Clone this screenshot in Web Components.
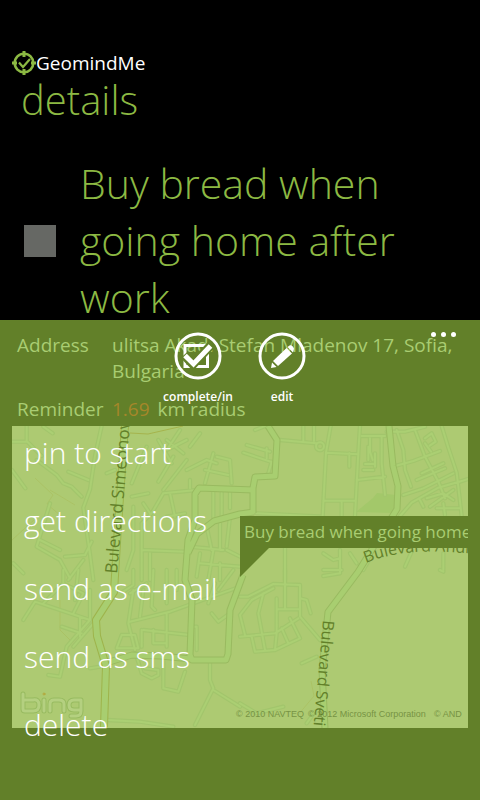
<!DOCTYPE html>
<html lang="en">
<head>
<meta charset="utf-8">
<meta name="viewport" content="width=device-width, initial-scale=1">
<title>GeomindMe</title>
<style>
  html, body { height: 100%; }
  body {
    margin: 0;
    background: #000;
    font-family: "Open Sans", "Noto Sans", sans-serif;
    --accent: #8cb943;
    --panel: #628029;
    --soft: #a9cd72;
  }
</style>
</head>
<body>
<geo-app>
  <geo-brand slot="header">GeomindMe</geo-brand>
  <geo-task slot="header" heading="details">Buy bread when going home after work</geo-task>
  <geo-details slot="details">
    <geo-field label="Address">ulitsa Akad. Stefan Mladenov 17, Sofia, Bulgaria</geo-field>
    <geo-field label="Reminder" amount="1.69">km radius</geo-field>
    <geo-map slot="map">Buy bread when going home after work</geo-map>
  </geo-details>
  <geo-appbar slot="menu">
    <geo-action slot="actions" icon="check">complete/in</geo-action>
    <geo-action slot="actions" icon="pencil">edit</geo-action>
    <geo-menu-item>pin to start</geo-menu-item>
    <geo-menu-item>get directions</geo-menu-item>
    <geo-menu-item>send as e-mail</geo-menu-item>
    <geo-menu-item>send as sms</geo-menu-item>
    <geo-menu-item>delete</geo-menu-item>
  </geo-appbar>
</geo-app>

<script>
const define = (name, render) => customElements.define(name, class extends HTMLElement {
  constructor() {
    super();
    this.attachShadow({ mode: "open" }).innerHTML = render(this);
  }
});

define("geo-app", () => `
  <style>
    :host { display: grid; grid-template-rows: auto 1fr; min-height: 100vh; }
    header { padding-top: 50px; }
    ::slotted([slot="details"]), ::slotted([slot="menu"]) { grid-area: 2 / 1; margin-top: -6px; }
    ::slotted([slot="menu"]) { z-index: 1; }
  </style>
  <header><slot name="header"></slot></header>
  <slot name="details"></slot>
  <slot name="menu"></slot>`);

define("geo-brand", () => `
  <style>
    :host { display: flex; align-items: center; padding-left: 12px; height: 26px; font-size: 19px; line-height: 26px; color: #fff; }
    svg { width: 24px; height: 24px; flex: none; }
  </style>
  <svg viewBox="0 0 24 24" fill="none" stroke="#8cb943" aria-hidden="true">
    <circle cx="12" cy="12" r="9.3" stroke-width="2.6"/>
    <path d="M12 0v6M12 18v6M0 12h5M19 12h5" stroke-width="3"/>
    <path d="M7 11.5l4 4.5 7-8" stroke-width="2.2"/>
  </svg><slot></slot>`);

define("geo-task", el => `
  <style>
    :host { display: block; color: var(--accent); font-weight: 300; }
    h1 { margin: 0; padding-left: 21px; font-size: 40px; line-height: 48px; font-weight: 300; }
    label { display: grid; grid-template-columns: 32px 1fr; align-items: center; gap: 24px; padding: 31px 24px 0; font-size: 41px; line-height: 57px; }
    input { appearance: none; width: 32px; height: 32px; margin: 0; background: #666864; }
  </style>
  <h1>${el.getAttribute("heading")}</h1>
  <label><input type="checkbox"><span><slot></slot></span></label>`);

define("geo-details", () => `
  <style>
    :host { display: block; box-sizing: border-box; padding: 12px 12px 72px; background: var(--panel); color: var(--soft); }
    .fields { display: grid; gap: 12px; padding: 0 5px 4px; }
  </style>
  <div class="fields"><slot></slot></div>
  <slot name="map"></slot>`);

define("geo-field", el => `
  <style>
    :host { display: grid; grid-template-columns: 95px 1fr; font-size: 19px; line-height: 26px; }
    .amount { color: #a68729; margin-right: 8px; }
  </style>
  <span>${el.getAttribute("label")}</span>
  <span>${el.hasAttribute("amount") ? `<span class="amount">${el.getAttribute("amount")}</span>` : ""}<slot></slot></span>`);

define("geo-map", () => `
  <style>
    :host { display: block; position: relative; overflow: hidden; aspect-ratio: 456 / 302; background: #adca72; }
    svg.map { display: block; width: 100%; height: 100%; }
    .callout { position: absolute; left: 50%; bottom: 50%; white-space: nowrap; }
    .callout p { margin: 0; padding: 0 4px; background: var(--panel); font-size: 17px; line-height: 32px; }
    .callout svg { display: block; width: 29px; height: 29px; }
    text { font-family: "Open Sans", sans-serif; font-size: 16px; fill: #628029; }
    .copyright text { font-family: "Liberation Sans", sans-serif; font-size: 9px; fill: #779344; }
  </style>
  <svg class="map" viewBox="12 426 456 302" preserveAspectRatio="xMidYMid slice" role="img" aria-label="Map">
    <defs>
      <g id="minor" fill="none" stroke-linecap="round" stroke-linejoin="round">
        <g transform="translate(0 420) scale(.33333)">
          <path d="M80 18v45l45 45M36 150l40 55M36 65h44M130 20l28 20M305 18l-20 90-15 100-20 55M110 120l60 45 20 25 25 10 30 30M205 155l60 25M150 250l-40 130 70 40 30 55M250 263l20 140M120 360l60 30M195 410l60-5 20-40M270 403l10 77M250 420l-45 60M320 160l25-10"/>
          <path d="M475 60l40 70M440 80l-45 110M500 60l50 40M540 30l-40 60 60-30M600 40l-30 40M520 110l-45 75M560 120l-70 90M560 150l60-30 30 10M640 100l-25 90M650 110l40 10 5 70M570 180v25M615 150l70 15M490 220l100-10M490 220l-35 60-30 30M430 250l20 30M425 310v170M400 260v130l-20 60M425 390l130 5M450 400v80M500 290l55-10M510 220l15 70M640 205v95M665 205v90M690 205v60M620 320l15 70M660 310v80M570 380l100 10M600 400l-10 70M640 390l-15 90M690 290l-10 90M680 390l40 20M600 430l120 10M660 430v50M40 430l30 30M395 230l50-10"/>
        </g>
        <g transform="translate(240 420) scale(.33333)">
          <path d="M45 30l30-12M20 75l70 20M10 98l85 28M80 85v30M95 125l-10 35M120 60l110 10M190 18v45M222 18v45M260 98l95 5M272 18l-14 80-10 190M360 18l-5 80-10 190M328 100v40M365 48h70M390 55v40l8 25M385 80v40M375 132h25M370 150h30M405 100v40M350 180l85-10M425 50v80l10 95M250 242h95M305 245v43M50 280l200 10M440 35h55l60-15M470 30l20 60 5 60 18 50M525 30l30 80 40 75 20 50M465 138l55-15 80-30M605 18l20 65 25 75 15 130M555 55l20-15 12 25-18 12M555 70l18 25M545 160l65-30M530 180l85-35M490 225l60-20 90-45M480 288l35-40 80-45 70-20M560 235l50-15 30 20M540 240l10 20M590 265h70M610 250l5 35M660 185l24-8M640 210l-70 50"/>
          <path d="M135 385v95M250 400l30 20 20-5v45l-50 8M300 390v25M330 400l20 30M515 395l-20 45M610 400v50M370 450l20-35"/>
          <circle cx="240" cy="79" r="12"/>
        </g>
        <g transform="translate(0 570) scale(.33333)">
          <path d="M70 150l35-55 165 55M130 100l60-60 60 30-30 60M190 0v40M235 0l-10 90M185 170l60 20M240 140v60M270 150l-70 80-20 90-35-5M270 150V60M280 160l-60 70M270 295l30-5M400 60l-15 100 20 80M390 155l120-30 210-75M430 60l-10 80M460 0l-5 110 10 10M500 0v100M530 0v60M430 180l140 15M425 180v50M460 180v40h40M500 130v100M365 195h40l10 40h-65zM635 130l20 25 35-25M575 170h15v70M625 100l20-60M655 60l45-60M410 260l15 50 30 15 20-10v-15l-40-5M490 260v95l45 10 20-60M630 280v50l10 25-55 110M640 360l80 50M320 450l100 5 100 15M400 0v45l-30 20M390 70l50-30"/>
        </g>
        <g transform="translate(240 570) scale(.33333)">
          <path d="M0 80h25l75-38 80 3v95l60 70M0 200l105-10 70-45M0 135l35-45 65-35M70 70l-15 60 20 110M135 0v115M110 85v105l-5 50M110 118h65M35 200l10 45 60-5 75-35-30-60M125 175l20 45M180 85l20 5 12 40M0 135l15 60M185 280l45-20M0 400l50 30 80-20M200 460l25-35M250 0h55M600 0l10 5"/>
        </g>
      </g>
      <g id="major" fill="none" stroke-linejoin="round">
        <path d="M254 490l-55-2-4 6v26l-7 20-3 40 7 20-2 55 2 5h34l2-6 2-44 13-35M254 512l-14 2-26 7-17 13-9 19M106 663l26-8 29 1 30 3"/>
        <path d="M268 426l9 14-2 36-20 1-2 11v25"/>
        <path d="M389 426l4 40 5 20-1 23-39 63-30 40-6 58 3 58"/>
      </g>
      <path id="boulevard" d="M125 426l-7 100-4 66-18 28 1 16 9 30-2 61" fill="none" stroke-linejoin="round"/>
      <path id="andrey" d="M366 563Q400 549 448 552T480 552"/>
      <path id="bing" d="M23 694v15q0 2 2 2h8q6 0 6-6t-6-5h-8M44 700v11M50 711v-7q0-4 4-4h5q5 0 5 4v7M81 700h-7q-5 0-5 5t5 5h7v-10 11q0 5-5 5h-5"/>
    </defs>
    <path d="M356 512l17-14 4-5 19 2-1 18z" fill="#a3c86a"/>
    <g fill="none" stroke="#a5b44d" stroke-width="1">
      <path d="M130 433l18 1 35-8"/>
      <path d="M35 478l18 17-6 9 14 12M50 490l25 15M12 540l22-20M60 600v30l12 12M298 715l16-19-3-15" opacity=".35"/>
    </g>
    <use href="#minor" stroke="#a2c56c" stroke-width="13"/>
    <use href="#minor" stroke="#abcf73" stroke-width="6"/>
    <use href="#major" stroke="#99ba60" stroke-width="7"/>
    <use href="#major" stroke="#a8ce70" stroke-width="5"/>
    <use href="#boulevard" stroke="#9eb44c" stroke-width="8"/>
    <use href="#boulevard" stroke="#a8ce70" stroke-width="6"/>
    <text transform="translate(117 574) rotate(-85)" style="font-size:17px">Bulevard Simeonovsko</text>
    <text transform="translate(323 620) rotate(95)">Bulevard Sveti</text>
    <text><textPath href="#andrey">Bulevard Andrey</textPath></text>
    <g fill="none" stroke-linecap="round" stroke-linejoin="round">
      <use href="#bing" stroke="#98bb60" stroke-width="5"/>
      <use href="#bing" stroke="#b4d080" stroke-width="3"/>
      <circle cx="44" cy="694" r="1" stroke="#b4a73a"/>
    </g>
    <g class="copyright">
      <text x="236" y="717">© 2010 NAVTEQ</text>
      <text x="308" y="717">© 2012 Microsoft Corporation</text>
      <text x="434" y="717">© AND</text>
    </g>
  </svg>
  <div class="callout">
    <p><slot></slot></p>
    <svg viewBox="0 0 29 29" aria-hidden="true"><path d="M0 0h29L0 29z" fill="#628029"/></svg>
  </div>`);

define("geo-appbar", () => `
  <style>
    :host { display: block; color: #fff; }
    .bar { display: grid; grid-template-columns: 1fr auto 1fr; height: 99px; }
    .actions { grid-column: 2; display: flex; gap: 12px; padding-top: 12px; }
    .more { justify-self: end; align-self: start; width: 72px; height: 30px; padding: 0; border: 0; background: none; color: inherit; }
    .more svg { display: block; width: 72px; height: 30px; }
    nav { display: grid; }
  </style>
  <div class="bar">
    <div class="actions"><slot name="actions"></slot></div>
    <button class="more" aria-label="more"><svg viewBox="0 0 72 30" fill="#fff"><circle cx="25.500" cy="14.500" r="2.500"/><circle cx="35.500" cy="14.500" r="2.500"/><circle cx="45.500" cy="14.500" r="2.500"/></svg></button>
  </div>
  <nav><slot></slot></nav>`);

const icons = {
  check: `<path d="M11 13.500H33.500V34.500H11z" stroke-width="3"/><path d="M10 23l9 9.500L38 12" stroke="#628029" stroke-width="9"/><path d="M11 23.500l8.500 8.500L36.500 14" stroke-width="5"/>`,
  pencil: `<path d="M15 29L28.500 16l5.500 5.500-14 12.500z" fill="#fff" stroke="none"/><path d="M14 30.500l4.500 4.500-5.500 1z" fill="#fff" stroke="none"/><path d="M29.500 15l2-1.500q1.500-.8 3.300.9t1 3.300L35 20.500z" fill="#fff" stroke="none"/>`
};

define("geo-action", el => `
  <style>
    :host { display: block; width: 72px; }
    button { display: grid; justify-items: center; gap: 8px; width: 100%; padding: 0; border: 0; background: none; color: #fff; font: 600 12px/18px "Open Sans", sans-serif; }
    svg { width: 48px; height: 48px; }
    span { white-space: nowrap; }
  </style>
  <button><svg viewBox="0 0 48 48" fill="none" stroke="#fff" aria-hidden="true"><circle cx="24" cy="24" r="22" stroke-width="3"/>${icons[el.getAttribute("icon")]}</svg><span><slot></slot></span></button>`);

define("geo-menu-item", () => `
  <style>
    :host { display: block; }
    button { display: block; width: 100%; padding: 0 24px; border: 0; background: none; color: #fff; text-align: left; font: 300 30px/68px "Open Sans", sans-serif; }
  </style>
  <button><slot></slot></button>`);
</script>
</body>
</html>
